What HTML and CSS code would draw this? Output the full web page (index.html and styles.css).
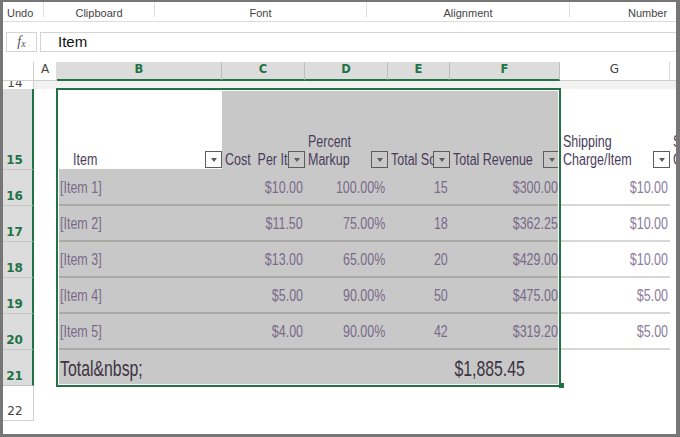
FILE: index.html
```html
<!DOCTYPE html>
<html>
<head>
<meta charset="utf-8">
<link rel="stylesheet" href="styles.css">
</head>
<body>
<div class="window">
  <div class="ribbon">
    <div class="grp g-undo">Undo</div>
    <div class="grp g-clip">Clipboard</div>
    <div class="grp g-font">Font</div>
    <div class="grp g-align">Alignment</div>
    <div class="grp g-num">Number</div>
  </div>
  <div class="fbar">
    <div class="fx"><span class="fx-f">f</span><span class="fx-x">x</span></div>
    <div class="formula">Item</div>
  </div>
  <div class="sheet">
    <div class="row r-head">
      <div class="c corner"></div>
      <div class="c ch">A</div>
      <div class="c ch on">B</div>
      <div class="c ch on">C</div>
      <div class="c ch on">D</div>
      <div class="c ch on">E</div>
      <div class="c ch on">F</div>
      <div class="c ch">G</div>
      <div class="c ch"></div>
    </div>
    <div class="row r-14">
      <div class="c rh r14">14</div>
      <div class="c c14"></div><div class="c c14"></div><div class="c c14"></div><div class="c c14"></div>
      <div class="c c14"></div><div class="c c14"></div><div class="c c14"></div><div class="c c14"></div>
    </div>
    <div class="row r-15">
      <div class="c rh on">15</div>
      <div class="c blank"></div>
      <div class="c th active"><span class="t"><span class="sq">Item</span></span><span class="dd"></span></div>
      <div class="c th"><span class="t"><span class="sq">Cost&nbsp; Per Item</span></span><span class="dd"></span></div>
      <div class="c th"><span class="t"><span class="sq">Percent<br>Markup</span></span><span class="dd"></span></div>
      <div class="c th"><span class="t"><span class="sq">Total Sold</span></span><span class="dd"></span></div>
      <div class="c th"><span class="t"><span class="sq">Total Revenue</span></span><span class="dd"></span></div>
      <div class="c th ext"><span class="t"><span class="sq">Shipping<br>Charge/Item</span></span><span class="dd"></span></div>
      <div class="c th ext"><span class="t"><span class="sq">Shipping<br>Cost</span></span></div>
    </div>
    <div class="row r-data">
      <div class="c rh on">16</div>
      <div class="c blank"></div>
      <div class="c td"><span class="sq">[Item 1]</span></div>
      <div class="c td num"><span class="sq">$10.00</span></div>
      <div class="c td num pct"><span class="sq">100.00%</span></div>
      <div class="c td num"><span class="sq">15</span></div>
      <div class="c td num"><span class="sq">$300.00</span></div>
      <div class="c td num out"><span class="sq">$10.00</span></div>
      <div class="c blank"></div>
    </div>
    <div class="row r-data">
      <div class="c rh on">17</div>
      <div class="c blank"></div>
      <div class="c td"><span class="sq">[Item 2]</span></div>
      <div class="c td num"><span class="sq">$11.50</span></div>
      <div class="c td num pct"><span class="sq">75.00%</span></div>
      <div class="c td num"><span class="sq">18</span></div>
      <div class="c td num"><span class="sq">$362.25</span></div>
      <div class="c td num out"><span class="sq">$10.00</span></div>
      <div class="c blank"></div>
    </div>
    <div class="row r-data">
      <div class="c rh on">18</div>
      <div class="c blank"></div>
      <div class="c td"><span class="sq">[Item 3]</span></div>
      <div class="c td num"><span class="sq">$13.00</span></div>
      <div class="c td num pct"><span class="sq">65.00%</span></div>
      <div class="c td num"><span class="sq">20</span></div>
      <div class="c td num"><span class="sq">$429.00</span></div>
      <div class="c td num out"><span class="sq">$10.00</span></div>
      <div class="c blank"></div>
    </div>
    <div class="row r-data">
      <div class="c rh on">19</div>
      <div class="c blank"></div>
      <div class="c td"><span class="sq">[Item 4]</span></div>
      <div class="c td num"><span class="sq">$5.00</span></div>
      <div class="c td num pct"><span class="sq">90.00%</span></div>
      <div class="c td num"><span class="sq">50</span></div>
      <div class="c td num"><span class="sq">$475.00</span></div>
      <div class="c td num out"><span class="sq">$5.00</span></div>
      <div class="c blank"></div>
    </div>
    <div class="row r-data">
      <div class="c rh on">20</div>
      <div class="c blank"></div>
      <div class="c td"><span class="sq">[Item 5]</span></div>
      <div class="c td num"><span class="sq">$4.00</span></div>
      <div class="c td num pct"><span class="sq">90.00%</span></div>
      <div class="c td num"><span class="sq">42</span></div>
      <div class="c td num"><span class="sq">$319.20</span></div>
      <div class="c td num out"><span class="sq">$5.00</span></div>
      <div class="c blank"></div>
    </div>
    <div class="row r-data">
      <div class="c rh on">21</div>
      <div class="c blank"></div>
      <div class="c tt"><span class="sq">Total&amp;nbsp;</span></div>
      <div class="c tt"></div>
      <div class="c tt"></div>
      <div class="c tt"></div>
      <div class="c tt sum"><span class="sq">$1,885.45</span></div>
      <div class="c blank"></div>
      <div class="c blank"></div>
    </div>
    <div class="row r-22">
      <div class="c rh">22</div>
    </div>
    <div class="selection"><span class="handle"></span></div>
  </div>
</div>
</body>
</html>
```

FILE: styles.css
```css
body {
  margin: 0;
}

.window {
  width: 680px;
  height: 437px;
  box-sizing: border-box;
  border-style: solid;
  border-color: #767676;
  border-width: 2px 4px 3px 3px;
  background: #fff;
  overflow: hidden;
  font-family: "Liberation Sans", Arial, sans-serif;
}

/* ribbon group labels */
.ribbon {
  display: flex;
  height: 20px;
  box-sizing: border-box;
  border-bottom: 1px solid #dcdcdc;
  font-size: 11px;
  color: #444;
}

.grp {
  flex: none;
  height: 15px;
  box-sizing: border-box;
  padding-top: 4px;
  line-height: 14px;
  border-right: 1px solid #e0e0e0;
  text-align: center;
  white-space: nowrap;
}

.g-undo { width: 41px; text-align: left; padding-left: 4px; }
.g-clip { width: 111px; }
.g-font { width: 212px; }
.g-align { width: 203px; }
.g-num { flex: 1; text-align: left; padding-left: 58px; border-right: none; }

/* formula bar */
.fbar {
  display: flex;
  height: 40px;
  box-sizing: border-box;
  padding-top: 10px;
}

.fx {
  flex: none;
  width: 31px;
  height: 20px;
  margin-left: 3px;
  box-sizing: border-box;
  border: 1px solid #d4d4d4;
  display: flex;
  align-items: center;
  justify-content: center;
  font-family: "Liberation Serif", serif;
  font-style: italic;
  color: #555;
}

.fx-f { font-size: 14px; }
.fx-x { font-size: 10px; margin-top: 3px; }

.formula {
  flex: 1;
  height: 20px;
  margin-left: 3px;
  margin-right: -6px;
  box-sizing: border-box;
  border: 1px solid #d4d4d4;
  padding-left: 17px;
  font-size: 15px;
  line-height: 18px;
  color: #111;
}

/* sheet grid */
.sheet {
  position: relative;
}

.row {
  display: grid;
  grid-template-columns: 31px 23px 165px 83px 83px 62px 110px 110px 60px;
}

.r-head { height: 19px; }
.r-14 { height: 8px; }
.r-15 { height: 81px; }
.r-data { height: 36px; }
.r-22 { height: 35px; }

.c {
  box-sizing: border-box;
  min-width: 0;
  overflow: hidden;
}

.corner {
  border-right: 1px solid #d0d0d0;
  border-bottom: 1px solid #d0d0d0;
}

.ch {
  font-family: "DejaVu Sans", sans-serif;
  font-size: 12px;
  line-height: 15px;
  text-align: center;
  color: #444;
  background: #fff;
  border-right: 1px solid #dadada;
  border-bottom: 1px solid #d0d0d0;
}

.ch.on {
  background: #dcdcdc;
  color: #217346;
  font-weight: bold;
  font-size: 11.5px;
  border-right-color: #bdbdbd;
  border-bottom: 2px solid #217346;
}

.rh {
  font-family: "DejaVu Sans", sans-serif;
  font-size: 12px;
  line-height: 12px;
  color: #444;
  background: #fff;
  display: flex;
  align-items: flex-end;
  justify-content: center;
  padding: 0 6px 3px 0;
  border-right: 1px solid #d0d0d0;
  border-bottom: 1px solid #d0d0d0;
}

.rh.r14 {
  padding-bottom: 0;
  border-bottom: none;
}

.rh.on {
  background: #dcdcdc;
  color: #217346;
  font-weight: bold;
  border-right: 2px solid #217346;
  border-bottom-color: #c4c4c4;
}

.c14 { background: #f2f2f2; }
.blank { background: #fff; }

/* narrow spreadsheet type: Arial-metric face squeezed horizontally */
.sq {
  display: inline-block;
  white-space: nowrap;
  transform: scaleX(0.78);
  transform-origin: left bottom;
}

/* table header row */
.th {
  background: #c8c8c8;
  display: flex;
  align-items: flex-end;
  padding-left: 3px;
  border-bottom: 1px solid #c8c8c8;
  font-size: 16px;
  line-height: 18px;
  color: #4a3d5c;
}

.th .t {
  flex: 1;
  min-width: 0;
  overflow: hidden;
  white-space: nowrap;
}

.th.active { background: #fff; padding-left: 16px; }
.th.ext { background: #fff; border-bottom-color: #fff; }

.dd {
  flex: none;
  width: 17px;
  height: 17px;
  margin-bottom: 1px;
  box-sizing: border-box;
  border: 1px solid #5c5c5c;
  display: flex;
  align-items: center;
  justify-content: center;
}

.dd::after {
  content: "";
  margin-top: 1px;
  border-left: 3.5px solid transparent;
  border-right: 3.5px solid transparent;
  border-top: 4px solid #5c5c5c;
}

/* table body */
.td {
  background: #c8c8c8;
  border-bottom: 2px solid #a9a9a5;
  display: flex;
  align-items: center;
  padding: 2px 2px 0 3px;
  white-space: nowrap;
  font-size: 16px;
  line-height: 18px;
  color: #7a6a8a;
}

.td.num { justify-content: flex-end; }
.td.num .sq { transform-origin: right center; }
.td.pct { padding-right: 3px; }

.td.out {
  background: #fff;
  border-bottom-color: #d6d6d2;
  color: #8b7b9e;
}

.tt {
  background: #c8c8c8;
  display: flex;
  align-items: flex-end;
  padding: 0 0 5px 3px;
  white-space: nowrap;
  font-size: 22px;
  line-height: 24px;
  color: #3d3442;
}

.tt .sq { transform: scaleX(0.72); }

.tt.sum {
  overflow: visible;
  justify-content: flex-end;
  padding-right: 35px;
}

.tt.sum .sq { transform-origin: right bottom; }

/* selection outline lying over the cells */
.selection {
  position: absolute;
  left: 53px;
  top: 26px;
  width: 505px;
  height: 299px;
  box-sizing: border-box;
  border: 2px solid #217346;
  box-shadow: inset 0 0 0 1px #fff;
}

.handle {
  position: absolute;
  right: -5px;
  bottom: -3px;
  width: 5px;
  height: 5px;
  background: #217346;
}
```
